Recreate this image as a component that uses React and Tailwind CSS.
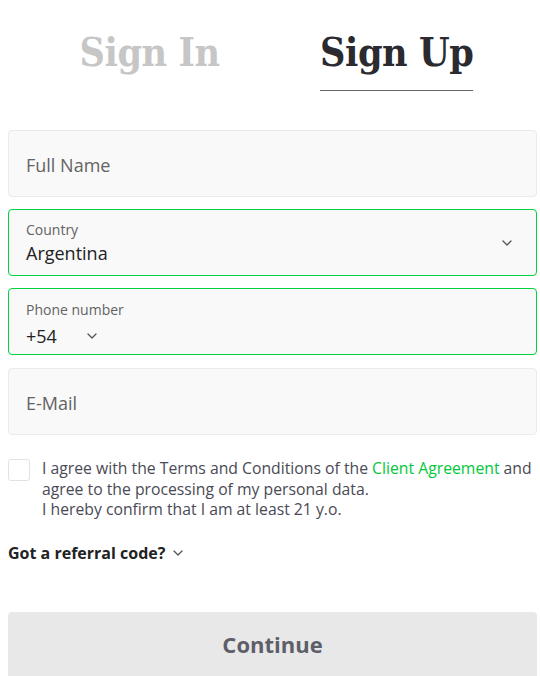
import React from "react";

const Chevron = ({ className }) => (
  <svg className={className} width="10" height="6" viewBox="0 0 10 6" fill="none">
    <path d="M1 1l4 4 4-4" stroke="#555" strokeWidth="1.3" strokeLinecap="round" strokeLinejoin="round" />
  </svg>
);

export default function App() {
  return (
    <div className="w-[540px] h-[676px] bg-white overflow-hidden font-['Open_Sans',sans-serif]">
      <div className="flex h-[91px]">
        <div className="w-1/2 flex justify-center">
          <div className="pl-[34px] pt-[26px] text-[40px] leading-[52px] font-bold font-['DejaVu_Serif',serif] text-[#c6c6c6] tracking-[-0.5px] scale-x-[0.88] origin-center">Sign In</div>
        </div>
        <div className="w-1/2 flex justify-start pl-[50px]">
          <div className="pt-[26px] text-[40px] leading-[52px] font-bold font-['DejaVu_Serif',serif] text-[#2a2a30] tracking-[-0.5px] border-b border-[#666] h-[91px] self-start scale-x-[0.88] origin-left">Sign Up</div>
        </div>
      </div>

      <div className="pl-[8px] pr-[3px] pt-[39px] flex flex-col gap-[12px]">
        <div className="h-[67px] rounded-[4px] border border-[#ebebeb] bg-[#f9f9f9] flex items-center px-[17px]">
          <span className="text-[18px] text-[#636363] pt-[3px]">Full Name</span>
        </div>
        <div className="h-[67px] rounded-[4px] border border-[#00d33b] bg-[#f9f9f9] flex items-center pl-[17px] pr-[24px]">
          <div className="flex-1 flex flex-col pt-[2px]">
            <span className="text-[14px] leading-[18px] text-[#636363]">Country</span>
            <span className="text-[18px] leading-[26px] text-[#222] pt-[1px]">Argentina</span>
          </div>
          <Chevron />
        </div>
        <div className="h-[67px] rounded-[4px] border border-[#00d33b] bg-[#f9f9f9] flex flex-col pt-[12px] pl-[17px]">
          <span className="text-[14px] leading-[18px] text-[#636363]">Phone number</span>
          <div className="flex items-center pt-[4px]">
            <span className="text-[18px] leading-[26px] text-[#222] w-[61px]">+54</span>
            <Chevron />
          </div>
        </div>
        <div className="h-[67px] rounded-[4px] border border-[#ebebeb] bg-[#f9f9f9] flex items-center px-[17px] mt-[1px]">
          <span className="text-[18px] text-[#636363] pt-[3px]">E-Mail</span>
        </div>
      </div>

      <div className="flex pl-[8px] pr-[2px] pt-[23px] gap-[12px]">
        <div className="w-[22px] h-[22px] shrink-0 rounded-[3px] border border-[#e2e2e2] bg-white mt-[1px]" />
        <p className="text-[15.75px] leading-[20.5px] text-[#4a4a55]">
          I agree with the Terms and Conditions of the <span className="text-[#00c83a]">Client Agreement</span> and agree to the processing of my personal data.
          <br />I hereby confirm that I am at least 21 y.o.
        </p>
      </div>

      <div className="flex items-center gap-[8px] px-[8px] pt-[21px]">
        <span className="text-[16px] font-bold text-[#222]">Got a referral code?</span>
        <Chevron />
      </div>

      <div className="pl-[8px] pr-[3px] pt-[47px]">
        <div className="h-[70px] rounded-[4px] bg-[#e8e8e8] flex items-start justify-center pt-[16px]">
          <span className="text-[22px] font-bold text-[#5e5e68]">Continue</span>
        </div>
      </div>
    </div>
  );
}
